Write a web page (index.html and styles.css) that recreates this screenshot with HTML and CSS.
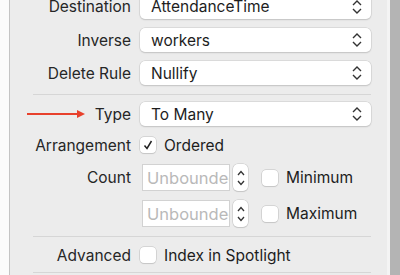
FILE: index.html
```html
<!DOCTYPE html>
<html lang="en">
<head>
    <meta charset="UTF-8">
    <title>Relationship Inspector</title>
    <link rel="stylesheet" href="styles.css">
</head>
<body>
<div class="frame">
    <div class="gutter"></div>
    <div class="panel">
        <div class="row row-first">
            <span class="label">Destination</span>
            <div class="popup"><span>AttendanceTime</span><svg class="chev" viewBox="0 0 10 16"><path d="M1 6 L5 2 L9 6 M1 10 L5 14 L9 10"/></svg></div>
        </div>
        <div class="row">
            <span class="label">Inverse</span>
            <div class="popup"><span>workers</span><svg class="chev" viewBox="0 0 10 16"><path d="M1 6 L5 2 L9 6 M1 10 L5 14 L9 10"/></svg></div>
        </div>
        <div class="row">
            <span class="label">Delete Rule</span>
            <div class="popup"><span>Nullify</span><svg class="chev" viewBox="0 0 10 16"><path d="M1 6 L5 2 L9 6 M1 10 L5 14 L9 10"/></svg></div>
        </div>

        <div class="sep"></div>

        <div class="row row-type">
            <span class="label">
                <svg class="arrow" viewBox="0 0 60 10"><path d="M0 5 H56" stroke-width="2"/><path d="M50 1 L58 5 L50 9 Z" class="head"/></svg>
                Type
            </span>
            <div class="popup"><span>To Many</span><svg class="chev" viewBox="0 0 10 16"><path d="M1 6 L5 2 L9 6 M1 10 L5 14 L9 10"/></svg></div>
        </div>
        <div class="row row-check">
            <span class="label">Arrangement</span>
            <label class="check"><span class="box"><svg viewBox="0 0 12 12"><path d="M2.5 6.5 L5 9.5 L9.5 2"/></svg></span>Ordered</label>
        </div>
        <div class="row row-count">
            <span class="label">Count</span>
            <div class="bound">
                <div class="field">Unbounded</div>
                <div class="stepper"><svg viewBox="0 0 10 22"><path d="M2 8 L5 4.5 L8 8 M2 14 L5 17.5 L8 14"/></svg></div>
                <label class="check"><span class="box"></span>Minimum</label>
            </div>
        </div>
        <div class="row row-count">
            <span class="label"></span>
            <div class="bound">
                <div class="field">Unbounded</div>
                <div class="stepper"><svg viewBox="0 0 10 22"><path d="M2 8 L5 4.5 L8 8 M2 14 L5 17.5 L8 14"/></svg></div>
                <label class="check"><span class="box"></span>Maximum</label>
            </div>
        </div>

        <div class="sep sep-low"></div>

        <div class="row row-check row-adv">
            <span class="label">Advanced</span>
            <label class="check"><span class="box"></span>Index in Spotlight</label>
        </div>

        <div class="sep sep-last"></div>
    </div>
    <div class="edge"></div>
</div>
</body>
</html>
```

FILE: styles.css
```css
body {
    margin: 0;
    background: #fbfbfb;
    font-family: "Inter", "Liberation Sans", sans-serif;
    font-size: 15.5px;
    color: #262626;
    overflow: hidden;
}

.frame {
    display: flex;
    height: 275px;
}

.gutter {
    width: 9px;
    border-right: 1px solid #c4c4c4;
    background: #fbfbfb;
}

.panel {
    flex: 1;
    background: #ececec;
    padding: 0 16px 0 0;
}

.edge {
    width: 10px;
    border-left: 3px solid #f4f4f4;
    background: #b4b4b4;
}

.row {
    display: grid;
    grid-template-columns: 121px 1fr;
    column-gap: 9px;
    align-items: center;
    height: 24px;
    margin-bottom: 9px;
}

.row-first {
    height: 19px;
    grid-template-rows: 19px;
    align-items: start;
}

.row-first .label {
    line-height: 14px;
}

.row-first .popup {
    margin-top: -5px;
}

.row-first .popup span {
    line-height: 14px;
}

.label {
    text-align: right;
    white-space: nowrap;
}

.popup {
    height: 24px;
    box-sizing: border-box;
    display: flex;
    align-items: center;
    justify-content: space-between;
    padding: 0 9px 0 11px;
    background: #fff;
    border-radius: 5px;
    box-shadow: 0 0 0 0.5px #c9c9c9, 0 1px 1.5px rgba(0, 0, 0, 0.18);
    color: #1d1d1d;
}

.chev {
    width: 10px;
    height: 16px;
    fill: none;
    stroke: #333;
    stroke-width: 1.4;
}

.sep {
    height: 1px;
    background: #d6d6d6;
    margin: 0 0 7px 23px;
}

.row-type .label {
    display: flex;
    justify-content: flex-end;
    align-items: center;
    gap: 8px;
}

.arrow {
    width: 60px;
    height: 10px;
}

.arrow path {
    stroke: #e8412c;
    fill: none;
}

.arrow .head {
    fill: #e8412c;
    stroke: none;
}

.row-check {
    height: 20px;
    margin-top: 1px;
    margin-bottom: 9px;
}

.check {
    display: flex;
    align-items: center;
    gap: 8px;
    color: #1d1d1d;
}

.box {
    width: 16px;
    height: 16px;
    box-sizing: border-box;
    background: #fff;
    border-radius: 4px;
    box-shadow: 0 0 0 0.5px #bdbdbd, 0 1px 1px rgba(0, 0, 0, 0.12);
    display: flex;
    align-items: center;
    justify-content: center;
}

.box svg {
    width: 12px;
    height: 12px;
    fill: none;
    stroke: #222;
    stroke-width: 1.5;
}

.row-count {
    height: 27px;
    margin-bottom: 9px;
}

.bound {
    display: flex;
    align-items: center;
}

.field {
    width: 88px;
    height: 27px;
    box-sizing: border-box;
    margin-left: 2px;
    padding: 3px 0 0 4px;
    background: #fff;
    border: 1px solid #d2d2d2;
    color: #b9b9b9;
    font-size: 16.5px;
    overflow: hidden;
    white-space: nowrap;
}

.stepper {
    width: 15px;
    height: 27px;
    box-sizing: border-box;
    margin-left: 3px;
    background: #fff;
    border-radius: 5px;
    box-shadow: 0 0 0 0.5px #c4c4c4, 0 1px 1px rgba(0, 0, 0, 0.15);
    display: flex;
    align-items: center;
    justify-content: center;
}

.stepper svg {
    width: 10px;
    height: 22px;
    fill: none;
    stroke: #333;
    stroke-width: 1.3;
}

.bound .check {
    margin-left: 14px;
}

.sep-low {
    margin-top: 1px;
    margin-bottom: 8px;
}

.row-adv {
    margin-top: 0;
    margin-bottom: 7px;
}
```
